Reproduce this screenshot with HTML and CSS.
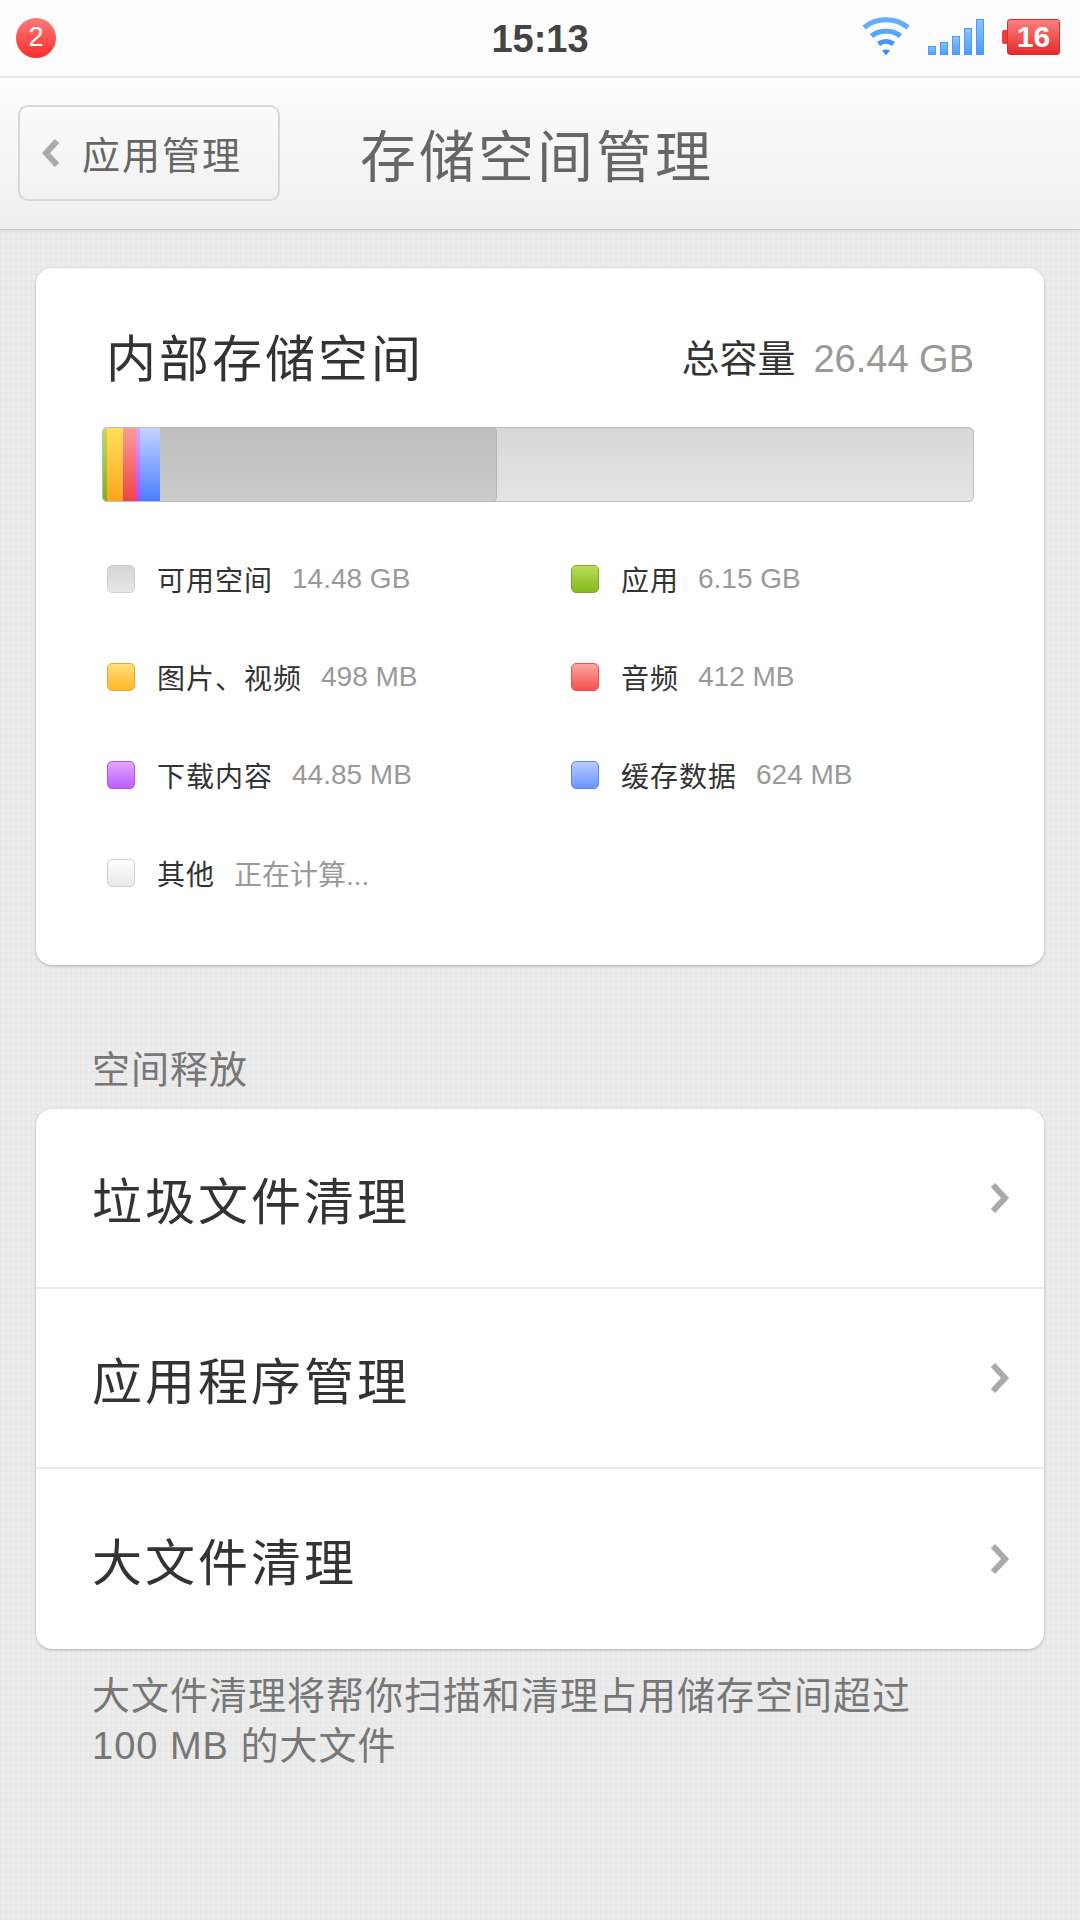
FILE: index.html
```html
<!DOCTYPE html>
<html lang="zh-CN">
<head>
    <meta charset="UTF-8">
    <title>存储空间管理</title>
    <link rel="stylesheet" href="styles.css">
</head>
<body>
    <div class="status-bar">
        <div class="status-left"><span class="notif-badge">2</span></div>
        <div class="status-time">15:13</div>
        <div class="status-right">
            <svg class="wifi-icon" width="50" height="42" viewBox="0 0 50 42">
                <defs>
                    <linearGradient id="wifi-grad" x1="0" y1="0" x2="0" y2="1">
                        <stop offset="0" stop-color="#66b2ff"/>
                        <stop offset="1" stop-color="#2f86fb"/>
                    </linearGradient>
                </defs>
                <g fill="none" stroke="url(#wifi-grad)" stroke-width="5">
                    <path d="M3 11.500 C15 1 35 1 47 11.500" stroke="#63aefc"/>
                    <path d="M10.500 20 C18 13.500 32 13.500 39.500 20" stroke="#58a6fc"/>
                    <path d="M17.500 28 C22 24.500 28 24.500 32.500 28" stroke="#4596fb"/>
                </g>
                <path d="M21 34.500 Q25 32.500 29 34.500 L25 39.500 Z" fill="#3a8cfb"/>
            </svg>
            <div class="signal-bars">
                <span class="signal-bar bar-1"></span>
                <span class="signal-bar bar-2"></span>
                <span class="signal-bar bar-3"></span>
                <span class="signal-bar bar-4"></span>
                <span class="signal-bar bar-5"></span>
            </div>
            <div class="battery"><span class="battery-tip"></span><span class="battery-level">16</span></div>
        </div>
    </div>

    <div class="nav-bar">
        <a class="back-button">
            <svg class="back-arrow" width="18" height="30" viewBox="0 0 18 30"><path d="M15 3 L4 15 L15 27" fill="none" stroke="#aaa" stroke-width="6"/></svg>
            <span>应用管理</span>
        </a>
        <h1 class="nav-title">存储空间管理</h1>
    </div>

    <div class="content">
        <div class="card storage-card">
            <div class="storage-header">
                <h2>内部存储空间</h2>
                <p class="total"><span class="total-label">总容量</span><span class="total-value">26.44 GB</span></p>
            </div>
            <div class="usage-bar">
                <div class="usage-used">
                    <span class="seg seg-apps"></span>
                    <span class="seg seg-media"></span>
                    <span class="seg seg-audio"></span>
                    <span class="seg seg-download"></span>
                    <span class="seg seg-cache"></span>
                </div>
            </div>
            <div class="legend">
                <div class="legend-item"><span class="swatch sw-free"></span><span class="legend-name">可用空间</span><span class="legend-value">14.48 GB</span></div>
                <div class="legend-item"><span class="swatch sw-apps"></span><span class="legend-name">应用</span><span class="legend-value">6.15 GB</span></div>
                <div class="legend-item"><span class="swatch sw-media"></span><span class="legend-name">图片、视频</span><span class="legend-value">498 MB</span></div>
                <div class="legend-item"><span class="swatch sw-audio"></span><span class="legend-name">音频</span><span class="legend-value">412 MB</span></div>
                <div class="legend-item"><span class="swatch sw-download"></span><span class="legend-name">下载内容</span><span class="legend-value">44.85 MB</span></div>
                <div class="legend-item"><span class="swatch sw-cache"></span><span class="legend-name">缓存数据</span><span class="legend-value">624 MB</span></div>
                <div class="legend-item"><span class="swatch sw-other"></span><span class="legend-name">其他</span><span class="legend-value">正在计算...</span></div>
            </div>
        </div>

        <h3 class="section-label">空间释放</h3>
        <div class="card list-card">
            <div class="list-row"><span>垃圾文件清理</span><svg class="chevron" width="20" height="32" viewBox="0 0 20 32"><path d="M3 3 L15 16 L3 29" fill="none" stroke="#aaa" stroke-width="6"/></svg></div>
            <div class="list-row"><span>应用程序管理</span><svg class="chevron" width="20" height="32" viewBox="0 0 20 32"><path d="M3 3 L15 16 L3 29" fill="none" stroke="#aaa" stroke-width="6"/></svg></div>
            <div class="list-row"><span>大文件清理</span><svg class="chevron" width="20" height="32" viewBox="0 0 20 32"><path d="M3 3 L15 16 L3 29" fill="none" stroke="#aaa" stroke-width="6"/></svg></div>
        </div>
        <p class="footnote">大文件清理将帮你扫描和清理占用储存空间超过<br>100 MB 的大文件</p>
    </div>
</body>
</html>
```

FILE: styles.css
```css
* {
    box-sizing: border-box;
}
body {
    margin: 0;
    width: 1080px;
    height: 1920px;
    overflow: hidden;
    font-family: "Liberation Sans", "Noto Sans CJK SC", sans-serif;
    color: #333;
    background-color: #ececec;
    background-image:
        repeating-linear-gradient(90deg, rgba(0,0,0,0.012) 0 2px, transparent 2px 5px),
        repeating-linear-gradient(0deg, rgba(0,0,0,0.012) 0 2px, transparent 2px 7px);
}

/* status bar */
.status-bar {
    position: relative;
    height: 78px;
    display: flex;
    align-items: center;
    justify-content: space-between;
    padding: 0 16px 2px;
    background: #fcfcfc;
    border-bottom: 2px solid #e6e6e6;
}
.notif-badge {
    display: block;
    width: 40px;
    height: 40px;
    margin-top: 2px;
    border-radius: 50%;
    background: linear-gradient(#ff7a7a, #fb2c2c);
    color: #fff;
    font-size: 27px;
    line-height: 39px;
    text-align: center;
}
.status-time {
    position: absolute;
    left: 0;
    right: 0;
    top: 17px;
    text-align: center;
    font-size: 38px;
    line-height: 44px;
    font-weight: bold;
    color: #444;
}
.status-right {
    display: flex;
    align-items: center;
    padding-right: 4px;
}
.wifi-icon {
    margin-right: 17px;
}
.signal-bars {
    display: flex;
    align-items: flex-end;
    gap: 4px;
    height: 36px;
    margin-right: 18px;
}
.signal-bar {
    width: 8px;
    background: linear-gradient(#8cc4ff, #4c9cfb);
    border: 1px solid #4b9bfb;
}
.bar-1 { height: 9px; }
.bar-2 { height: 13px; }
.bar-3 { height: 19px; }
.bar-4 { height: 27px; }
.bar-5 { height: 36px; }
.battery {
    display: flex;
    align-items: center;
}
.battery-tip {
    width: 5px;
    height: 14px;
    background: #ee3b3b;
    border-radius: 2px 0 0 2px;
}
.battery-level {
    width: 53px;
    height: 36px;
    border-radius: 3px;
    background: linear-gradient(#fb8080, #e62a2a);
    border: 1px solid #dd2a2a;
    color: #fff;
    font-size: 30px;
    line-height: 34px;
    font-weight: bold;
    text-align: center;
}

/* nav bar */
.nav-bar {
    height: 152px;
    display: flex;
    align-items: center;
    padding: 0 0 2px 18px;
    background: linear-gradient(#fdfdfd, #efefef);
    border-bottom: 1px solid #c8c8c8;
    box-shadow: 0 1px 2px rgba(0,0,0,0.08);
}
.back-button {
    width: 262px;
    height: 96px;
    display: flex;
    align-items: center;
    padding-left: 22px;
    border: 2px solid #d8d8d8;
    border-radius: 10px;
    font-size: 38px;
    letter-spacing: 2px;
    color: #666;
}
.back-arrow {
    margin-right: 22px;
}
.nav-title {
    margin: 0 0 0 80px;
    font-size: 56px;
    font-weight: normal;
    letter-spacing: 3px;
    color: #666;
}

/* cards */
.content {
    padding: 38px 36px 0;
}
.card {
    background: #fff;
    border-radius: 16px;
    box-shadow: 0 1px 3px rgba(0,0,0,0.25);
}
.storage-card {
    height: 697px;
    padding: 48px 70px 0 66px;
}
.storage-header {
    display: flex;
    align-items: center;
    justify-content: space-between;
    height: 78px;
    padding-left: 4px;
}
.storage-header h2 {
    margin: 0;
    font-size: 50px;
    font-weight: normal;
    letter-spacing: 3px;
    color: #333;
}
.total {
    margin: 0;
    font-size: 38px;
}
.total-label {
    color: #333;
    margin-right: 18px;
}
.total-value {
    color: #999;
}
.usage-bar {
    height: 75px;
    margin-top: 33px;
    border-radius: 5px;
    border: 1px solid #bdbdbd;
    background: linear-gradient(#d8d8d8, #e4e4e4);
    overflow: hidden;
}
.usage-used {
    width: 394px;
    margin-top: -1px;
    height: 75px;
    border-radius: 5px;
    background: linear-gradient(#bdbdbd, #cbcbcb);
    border-right: 1px solid #b5b5b5;
    border-bottom: 1px solid #b5b5b5;
    display: flex;
}
.seg {
    display: block;
    height: 100%;
}
.seg-apps { width: 4px; background: linear-gradient(#c4dc5a, #7fb01c); }
.seg-media { width: 16px; background: linear-gradient(#ffe05c, #ffa61e); }
.seg-audio { width: 13px; background: linear-gradient(#fb9c9c, #f04444); }
.seg-download { width: 4px; background: linear-gradient(#e0a4ff, #b840ff); }
.seg-cache { width: 20px; background: linear-gradient(#c4d6ff, #4a7cff); }

/* legend */
.legend {
    display: grid;
    grid-template-columns: 464px 1fr;
    grid-auto-rows: 98px;
    margin-top: 28px;
    padding-left: 5px;
}
.legend-item {
    display: flex;
    align-items: center;
    font-size: 28px;
}
.swatch {
    width: 28px;
    height: 28px;
    border-radius: 5px;
    margin-right: 22px;
    border: 1px solid;
}
.legend-name {
    color: #333;
    letter-spacing: 1px;
    margin-right: 19px;
}
.legend-value {
    color: #999;
}
.sw-free { background: linear-gradient(#d6d6d6, #e6e6e6); border-color: #d0d0d0; }
.sw-apps { background: linear-gradient(#bcdc5c, #84b81c); border-color: #7fa826; }
.sw-media { background: linear-gradient(#ffde7c, #ffb828); border-color: #eaa42a; }
.sw-audio { background: linear-gradient(#fda6a0, #f45050); border-color: #e85050; }
.sw-download { background: linear-gradient(#e0a8ff, #bc5cff); border-color: #b050f0; }
.sw-cache { background: linear-gradient(#b8ccff, #6c94ff); border-color: #5c84ee; }
.sw-other { background: linear-gradient(#fff, #e8e8e8); border-color: #d0d0d0; }

/* list */
.section-label {
    margin: 80px 0 0;
    height: 64px;
    padding-left: 56px;
    font-size: 38px;
    line-height: 50px;
    font-weight: normal;
    letter-spacing: 1px;
    color: #777;
}
.list-card {
    overflow: hidden;
}
.list-row {
    height: 180px;
    display: flex;
    align-items: center;
    justify-content: space-between;
    padding: 0 34px 0 56px;
    font-size: 50px;
    letter-spacing: 3px;
    color: #333;
    border-bottom: 2px solid #ebebeb;
}
.list-row:last-child {
    border-bottom: none;
}
.footnote {
    margin: 22px 0 0;
    padding-left: 56px;
    font-size: 38px;
    line-height: 50px;
    letter-spacing: 1px;
    color: #777;
}
```
